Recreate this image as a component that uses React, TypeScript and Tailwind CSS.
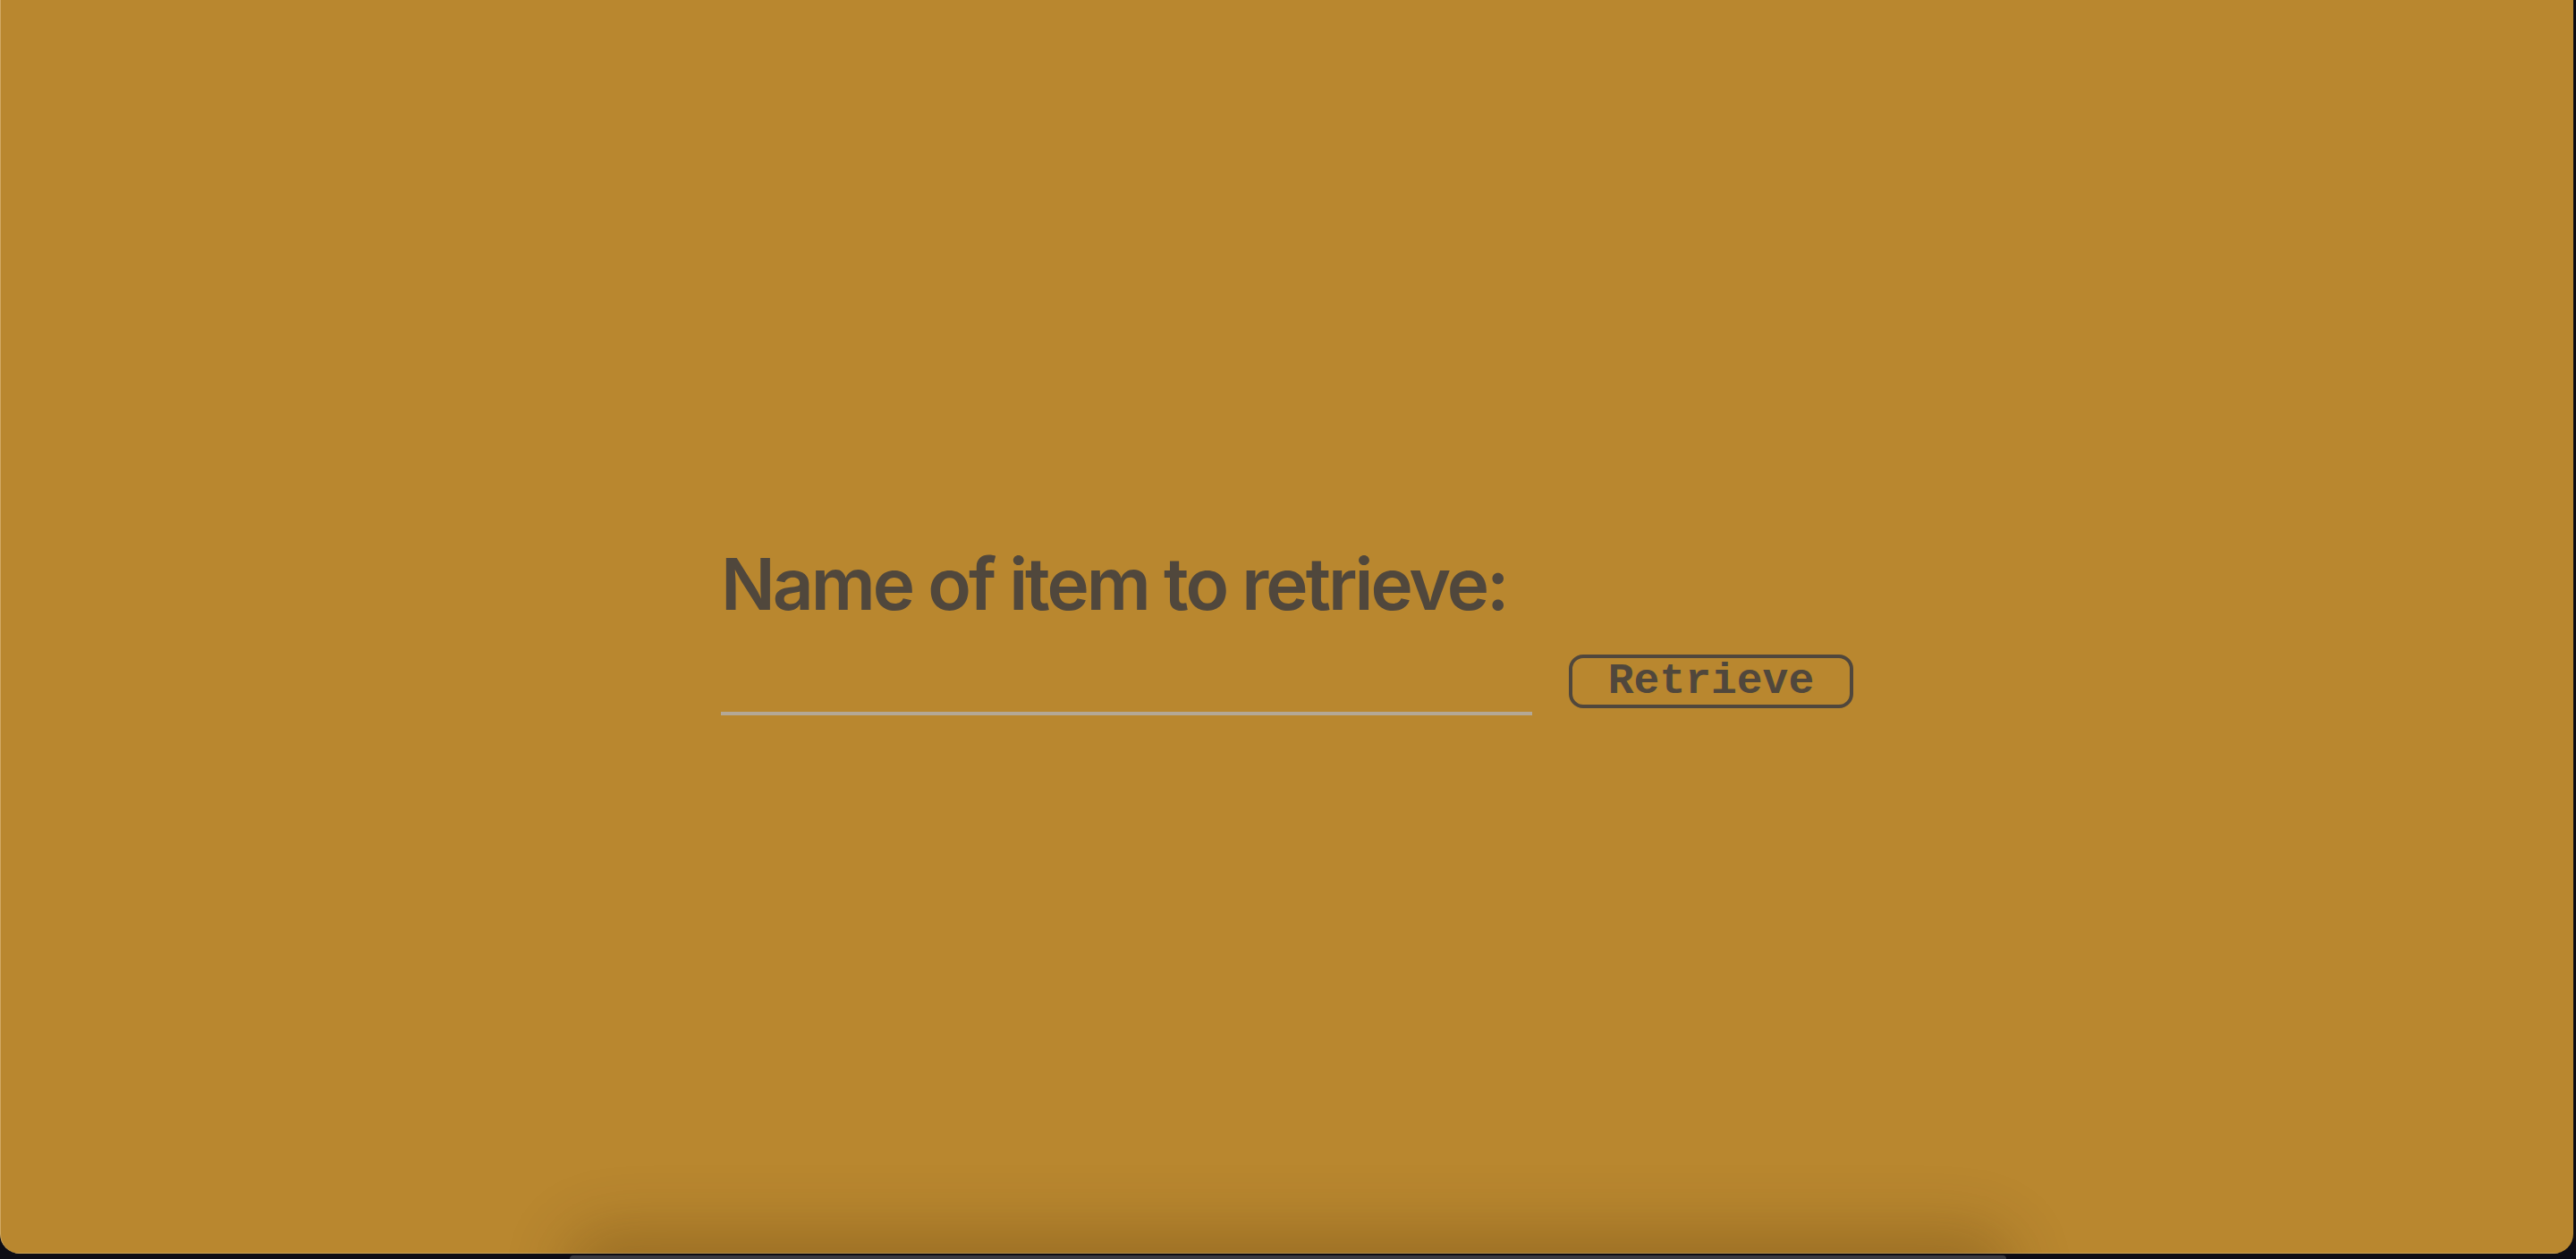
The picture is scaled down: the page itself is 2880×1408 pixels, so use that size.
import React from "react";

export default function App() {
  return (
    <div className="w-[2880px] h-[1408px] bg-[#0d0c14] flex flex-col overflow-hidden">
      <div className="relative w-[2877px] h-[1402px] shrink-0 bg-[#b9872f] rounded-b-[22px] border-l-[1px] border-l-[#d0a862] overflow-hidden flex items-center justify-center">
        {/* bottom highlight line */}
        <div className="absolute left-0 right-0 bottom-0 h-[1px] bg-[#c9a256]" />
        {/* dock shadow cast on window */}
        <div className="absolute left-[660px] w-[1560px] top-[1404px] h-[40px] rounded-[40px] shadow-[0_0_70px_30px_rgba(60,35,0,0.24)]" />
        <div className="flex flex-col mt-[2px]">
          <h1 className="font-['Inter',sans-serif] font-semibold text-[80px] leading-[97px] text-[#50473c] tracking-[-3px] mb-[31px]">
            Name of item to retrieve:
          </h1>
          <div className="flex items-end gap-[41px]">
            <input
              type="text"
              className="w-[907px] h-[68px] bg-transparent border-0 border-b-[4px] border-b-[#b4a896] outline-none text-[40px] text-[#50473c] font-['Inter',sans-serif]"
            />
            <button className="mb-[8px] w-[318px] h-[60px] border-[4px] border-[#50473c] rounded-[16px] bg-transparent font-['Liberation_Mono','Courier_New',monospace] font-bold text-[48px] leading-none text-[#50473c] flex items-center justify-center">
              Retrieve
            </button>
          </div>
        </div>
      </div>
      <div className="h-[6px] shrink-0 relative">
        <div className="absolute left-[637px] w-[1606px] top-[2px] h-[4px] rounded-t-[4px] bg-[#3a3a40]" />
      </div>
    </div>
  );
}
